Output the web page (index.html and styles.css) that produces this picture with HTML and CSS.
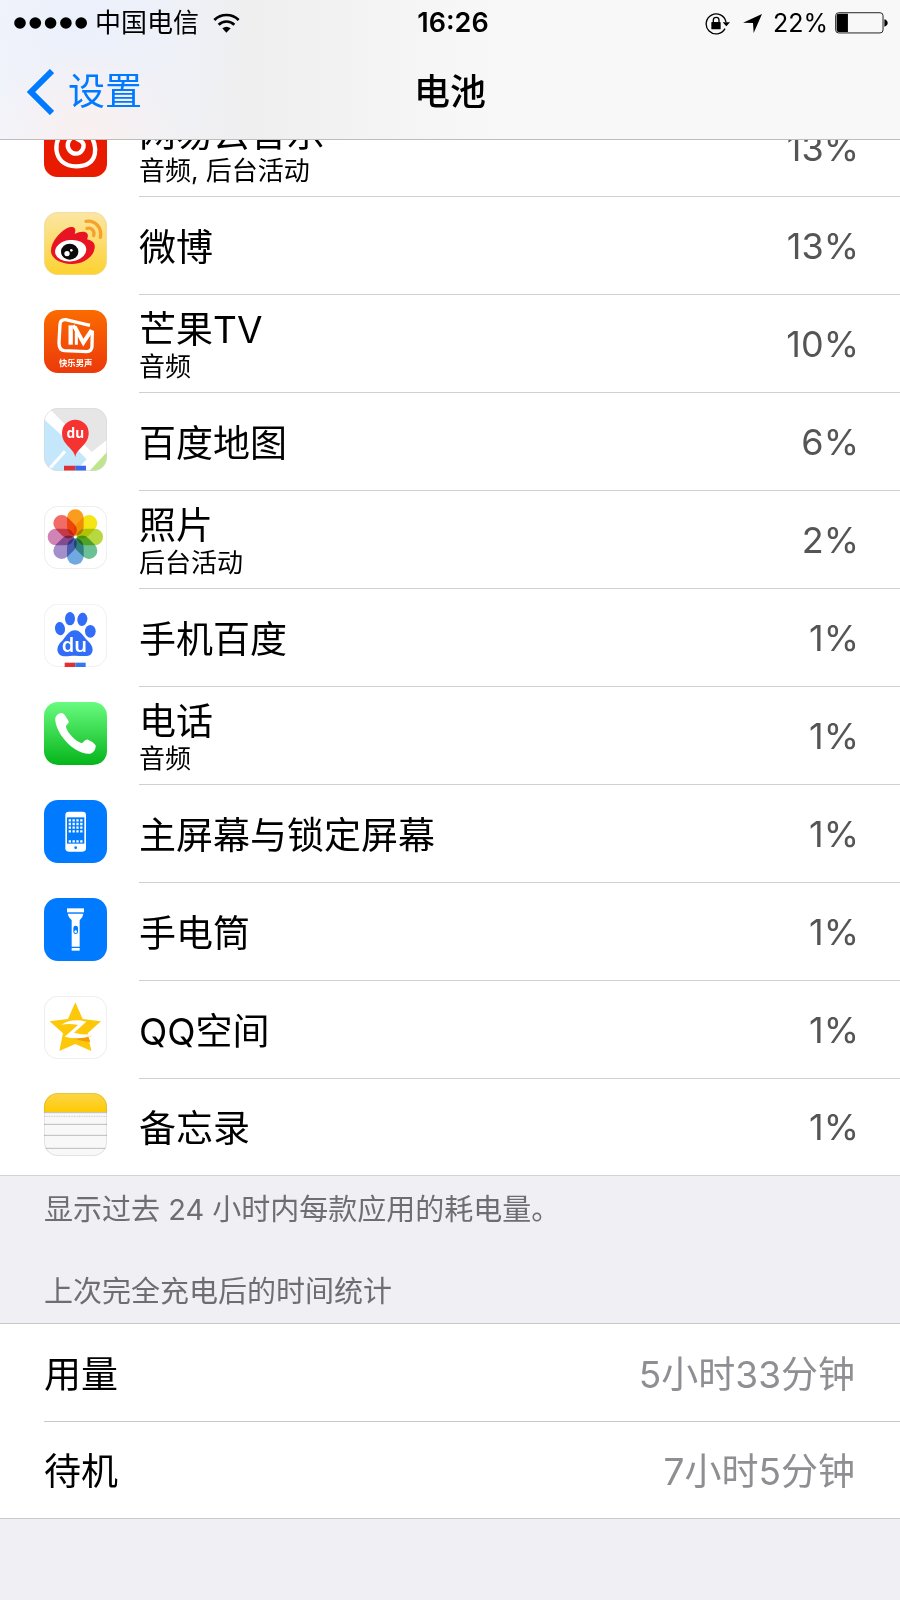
FILE: index.html
```html
<!DOCTYPE html>
<html lang="zh-CN">
<head>
<meta charset="utf-8">
<meta name="viewport" content="width=device-width, initial-scale=1">
<title>电池</title>
<link rel="stylesheet" href="styles.css">
</head>
<body>
<header class="top">
  <div class="status">
    <div class="status-left">
      <svg class="signal" viewBox="0 0 74 12" aria-hidden="true"><circle cx="6" cy="6" r="5.8"/><circle cx="21.3" cy="6" r="5.8"/><circle cx="36.6" cy="6" r="5.8"/><circle cx="51.9" cy="6" r="5.8"/><circle cx="67.2" cy="6" r="5.8"/></svg>
      <span>中国电信</span>
      <svg class="wifi" viewBox="0 0 81 60" aria-hidden="true"><g fill="none" stroke="#000" stroke-width="8"><path d="M4 21A52 52 0 0 1 77 21"/><path d="M17 35A34 34 0 0 1 64 35"/></g><path d="M28 46Q40 36 53 46L40 59Z"/></svg>
    </div>
    <time class="clock">16:26</time>
    <div class="status-right">
      <svg class="lock" viewBox="0 0 75 69" aria-hidden="true"><path d="M60 50A30 30 0 1 1 63 30" fill="none" stroke="#000" stroke-width="4"/><path d="M53 31H75L64 43Z"/><rect x="19" y="30" width="28" height="22" rx="2"/><path d="M25 32V24Q25 16 33.500 16T42 24V32" fill="none" stroke="#000" stroke-width="4"/></svg>
      <svg class="arrow" viewBox="0 0 57 57" aria-hidden="true"><path d="M57 0L32 57L30 27L0 26Z"/></svg>
      <span class="charge">22%</span>
      <svg class="battery" viewBox="0 0 160 66" aria-hidden="true"><rect x="2" y="2" width="143" height="61" rx="9" fill="none" stroke="#222" stroke-width="3"/><path d="M11 5H39V60H11Q5 60 5 54V11Q5 5 11 5Z"/><path d="M149 22Q159 25 159 33T149 44Z"/></svg>
    </div>
  </div>
  <nav class="nav">
    <a class="back" href="#settings"><svg class="chevron" viewBox="0 0 27 46" aria-hidden="true"><path d="M25 2L4 23L25 44" fill="none" stroke="currentColor" stroke-width="6"/></svg><span>设置</span></a>
    <h1 class="page-title">电池</h1>
  </nav>
</header>
<main>
  <ul class="group apps">
    <li class="row">
      <svg class="icon" viewBox="0 0 189 189" aria-hidden="true"><rect width="189" height="189" rx="40" fill="#e81b00"/><g fill="none" stroke="#fff" stroke-width="13" stroke-linecap="round"><path d="M72 44C22 66 22 157 96 157S158 88 140 66S100 50 92 62"/><path d="M102 30C84 38 92 58 94 68S108 76 116 86S114 119 96 119S68 100 72 87S86 68 96 66"/></g></svg>
      <div class="label"><span class="name">网易云音乐</span><span class="detail">音频, 后台活动</span></div><span class="percent">13%</span>
    </li>
    <li class="row">
      <svg class="icon" viewBox="0 0 189 189" aria-hidden="true"><defs><linearGradient id="weibo" x2="0" y2="1"><stop stop-color="#fbe6a5"/><stop offset="1" stop-color="#fdd22f"/></linearGradient></defs><rect x="1" y="1" width="187" height="187" rx="41" fill="url(#weibo)" stroke="#ead392" stroke-width="2"/><path d="M21 115C22 90 45 62 66 50C76 44 88 43 92 49C96 55 93 60 92 66C108 58 124 57 130 65C134 71 130 78 129 82C144 85 154 93 152 107C149 136 115 158 80 156C45 154 20 138 21 115Z" fill="#e81423"/><ellipse cx="80" cy="116" rx="47" ry="32" transform="rotate(-7 80 116)" fill="#fff"/><ellipse cx="77" cy="119" rx="26" ry="24" fill="#0a0a0a"/><circle cx="69" cy="125" r="8" fill="#fff"/><circle cx="82" cy="115" r="4" fill="#fff"/><g fill="none" stroke="#f5a22d" stroke-width="10" stroke-linecap="round"><path d="M126 28C155 24 175 48 169 76"/><path d="M129 49C143 46 153 57 149 71"/></g></svg>
      <div class="label"><span class="name">微博</span></div><span class="percent">13%</span>
    </li>
    <li class="row">
      <svg class="icon" viewBox="0 0 189 189" aria-hidden="true"><defs><linearGradient id="mango" x2="0" y2="1"><stop stop-color="#fb6b00"/><stop offset="1" stop-color="#ec390b"/></linearGradient></defs><rect width="189" height="189" rx="42" fill="url(#mango)"/><g fill="none" stroke="#fff"><path d="M138 46L65 29Q49 28 48 43L45 98Q45 120 61 122L128 125Q143 124 144 110L145 62" stroke-width="10"/><path d="M80 104V46" stroke-width="13"/><path d="M88 46L97 62V104" stroke-width="9"/><path d="M92 50L118 98L143 60" stroke-width="12"/></g><text class="mango-text" x="95" y="168" text-anchor="middle">快乐男声</text></svg>
      <div class="label"><span class="name">芒果TV</span><span class="detail">音频</span></div><span class="percent">10%</span>
    </li>
    <li class="row">
      <svg class="icon" viewBox="0 0 189 189" aria-hidden="true"><defs><clipPath id="tile"><rect width="189" height="189" rx="42"/></clipPath></defs><g clip-path="url(#tile)"><rect width="189" height="189" fill="#fff"/><path d="M15 0L143 132L189 96V0Z" fill="#e6e6e6"/><path d="M0 34L101 126L128 154L95 189H0Z" fill="#c5e7fb"/><path d="M10 189L63 130" stroke="#fff" stroke-width="9"/><path d="M189 132V189H136Z" fill="#bfe58c"/><path d="M60 173H94V189H60Z" fill="#df3034"/><path d="M94 173H126V189H94Z" fill="#3b67ec"/><path d="M94 148C90 119 54 112 54 75A40 40 0 0 1 134 75C134 112 98 119 94 148Z" fill="#f53431"/></g><rect x="1" y="1" width="187" height="187" rx="41" fill="none" stroke="#d8d8d8" stroke-width="2"/><text class="du-text" x="94" y="91" font-size="41" text-anchor="middle">du</text></svg>
      <div class="label"><span class="name">百度地图</span></div><span class="percent">6%</span>
    </li>
    <li class="row">
      <svg class="icon" viewBox="0 0 189 189" aria-hidden="true"><rect x="1" y="1" width="187" height="187" rx="41" fill="#fff" stroke="#e3e3e3" stroke-width="2"/><g class="petals" transform="translate(94 93)"><rect x="-25" y="-83" width="50" height="79" rx="25" fill="#fa9d1f"/><rect x="-25" y="-83" width="50" height="79" rx="25" fill="#f5e514" transform="rotate(45)"/><rect x="-25" y="-83" width="50" height="79" rx="25" fill="#b7d840" transform="rotate(90)"/><rect x="-25" y="-83" width="50" height="79" rx="25" fill="#6cc095" transform="rotate(135)"/><rect x="-25" y="-83" width="50" height="79" rx="25" fill="#70a9df" transform="rotate(180)"/><rect x="-25" y="-83" width="50" height="79" rx="25" fill="#a28fcb" transform="rotate(225)"/><rect x="-25" y="-83" width="50" height="79" rx="25" fill="#d084b6" transform="rotate(270)"/><rect x="-25" y="-83" width="50" height="79" rx="25" fill="#f26c67" transform="rotate(315)"/></g></svg>
      <div class="label"><span class="name">照片</span><span class="detail">后台活动</span></div><span class="percent">2%</span>
    </li>
    <li class="row">
      <svg class="icon" viewBox="0 0 189 189" aria-hidden="true"><rect x="1" y="1" width="187" height="187" rx="41" fill="#fff" stroke="#e8e8e8" stroke-width="2"/><g fill="#316df6"><ellipse cx="48" cy="74" rx="15" ry="20" transform="rotate(-8 48 74)"/><ellipse cx="78" cy="44" rx="15" ry="20"/><ellipse cx="115" cy="46" rx="15" ry="20" transform="rotate(8 115 46)"/><ellipse cx="139" cy="82" rx="16" ry="19"/><path d="M93 79C110 79 118 98 128 107C146 122 150 138 142 149C134 160 112 155 93 155C74 155 55 162 45 150C36 138 40 122 55 110C66 98 74 79 93 79Z"/></g><path d="M62 176H94V189H62Z" fill="#df3034"/><path d="M94 176H125V189H94Z" fill="#3577ed"/><text class="du-text du-wide" x="91" y="144" font-size="60" text-anchor="middle">du</text></svg>
      <div class="label"><span class="name">手机百度</span></div><span class="percent">1%</span>
    </li>
    <li class="row">
      <svg class="icon" viewBox="0 0 189 189" aria-hidden="true"><defs><linearGradient id="phone" x2="0" y2="1"><stop stop-color="#69fb80"/><stop offset="1" stop-color="#05b51a"/></linearGradient></defs><rect width="189" height="189" rx="42" fill="url(#phone)"/><path d="M34 47C37 39 45 33 54 33C62 35 68 48 74 58C76 66 64 68 66 76C72 95 95 118 112 123C119 124 122 111 132 113C142 117 152 124 155 130C156 140 150 153 138 155C110 157 77 135 57 107C44 90 32 66 34 47Z" fill="#fff"/></svg>
      <div class="label"><span class="name">电话</span><span class="detail">音频</span></div><span class="percent">1%</span>
    </li>
    <li class="row">
      <svg class="icon" viewBox="0 0 189 189" aria-hidden="true"><rect width="189" height="189" rx="42" fill="#007aff"/><rect x="64" y="35" width="62" height="120" rx="10" fill="#fff"/><path d="M69 52H121V131H69Z" fill="#007aff"/><g stroke="#fff" stroke-width="7" stroke-dasharray="7 4.500"><path d="M74 61H116M74 72H116M74 83H116M74 94H116M74 124H116"/></g><circle cx="95" cy="143" r="4" fill="#007aff"/></svg>
      <div class="label"><span class="name">主屏幕与锁定屏幕</span></div><span class="percent">1%</span>
    </li>
    <li class="row">
      <svg class="icon" viewBox="0 0 189 189" aria-hidden="true"><rect width="189" height="189" rx="42" fill="#007aff"/><g fill="#fff"><path d="M69 31H120V43H69Z"/><path d="M71 47H118Q117 58 107 67V146H83V67Q73 58 71 47Z"/><path d="M83 150H107V158H83Z"/></g><rect x="88" y="83" width="14" height="25" rx="7" fill="#007aff"/><circle cx="95" cy="101" r="4" fill="#fff"/></svg>
      <div class="label"><span class="name">手电筒</span></div><span class="percent">1%</span>
    </li>
    <li class="row">
      <svg class="icon" viewBox="0 0 189 189" aria-hidden="true"><rect x="1" y="1" width="187" height="187" rx="41" fill="#fff" stroke="#e3e3e3" stroke-width="2"/><path d="M94 19L116 69L171 76L131 112L142 165L94 144L46 165L57 112L17 76L72 69Z" fill="#fdc80a"/><path d="M86 126Q124 130 148 118L133 122L139 137Q112 137 86 126Z" fill="#f39a08"/><path d="M52 86Q84 66 127 77L90 110Q118 118 148 115Q112 135 62 122L102 87Q76 81 52 86Z" fill="#fff"/></svg>
      <div class="label"><span class="name">QQ空间</span></div><span class="percent">1%</span>
    </li>
    <li class="row">
      <svg class="icon" viewBox="0 0 189 189" aria-hidden="true"><defs><linearGradient id="notes" x2="0" y2="1"><stop stop-color="#fdd648"/><stop offset="1" stop-color="#fdca03"/></linearGradient></defs><g clip-path="url(#tile)"><rect width="189" height="189" fill="#f8f8f8"/><rect width="189" height="58" fill="url(#notes)"/><g stroke="#bcbcbc" stroke-width="3"><path d="M0 59H189M0 94H189M0 127H189M0 166H189"/><path d="M0 70H189" stroke="#ccc" stroke-dasharray="3 2"/></g></g><rect x="1" y="1" width="187" height="187" rx="41" fill="none" stroke="#000" stroke-opacity=".15" stroke-width="2"/></svg>
      <div class="label"><span class="name">备忘录</span></div><span class="percent">1%</span>
    </li>
  </ul>
  <p class="note">显示过去 24 小时内每款应用的耗电量。</p>
  <h2 class="section-title">上次完全充电后的时间统计</h2>
  <dl class="group stats">
    <div class="stat"><dt>用量</dt><dd>5小时33分钟</dd></div>
    <div class="stat"><dt>待机</dt><dd>7小时5分钟</dd></div>
  </dl>
</main>
</body>
</html>
```

FILE: styles.css
```css
* { box-sizing: border-box; }
body {
  margin: 0;
  background: #efeff4;
  color: #000;
  font-family: Inter, "Noto Sans CJK SC", sans-serif;
  font-size: 37px;
  font-weight: 380;
  line-height: 44px;
}
h1, h2, p, ul, dl, dd { margin: 0; padding: 0; }
svg { display: block; flex: none; }

.top {
  position: sticky;
  top: 0;
  z-index: 1;
  height: 140px;
  border-bottom: 1px solid #bdbdbf;
  background:
    radial-gradient(circle at 10% 100%, #faf0ef 0, transparent 100px),
    radial-gradient(circle at 10% 20%, #ebf0fb 0, transparent 160px),
    linear-gradient(90deg, #f4f5fb, #efeff0 28%, #f8f8f8 55%);
}
.status {
  display: grid;
  grid-template-columns: 1fr auto 1fr;
  align-items: center;
  height: 46px;
  padding: 0 12px 0 14px;
  font-size: 26px;
  line-height: 32px;
}
.status-left, .status-right { display: flex; align-items: center; font-weight: 400; }
.status-left { gap: 7px; }
.status-right { justify-content: flex-end; gap: 7px; }
.clock { padding-left: 4px; font-size: 27px; font-weight: 600; }
.charge { font-size: 25px; }
.signal { width: 74px; height: 12px; }
.wifi { width: 27px; height: 20px; margin-left: 7px; }
.lock { width: 25px; height: 23px; margin-right: 6px; }
.arrow { width: 19px; height: 19px; margin-right: 4px; }
.battery { width: 53px; height: 22px; }

.nav {
  display: grid;
  grid-template-columns: 1fr auto 1fr;
  align-items: center;
  height: 92px;
  padding: 0 27px;
}
.back {
  display: flex;
  align-items: center;
  gap: 14px;
  color: #007aff;
  text-decoration: none;
}
.chevron { width: 27px; height: 46px; }
.page-title { font-size: 36px; font-weight: 500; line-height: 44px; }

.group { background: #fff; list-style: none; }
.apps { margin-top: -41px; border-bottom: 1px solid #d3d3d7; }
.row {
  display: grid;
  grid-template-columns: 63px 1fr auto;
  align-items: center;
  column-gap: 32px;
  height: 98px;
  padding: 0 41px 0 44px;
  background: linear-gradient(#d0d0d3, #d0d0d3) 139px 100% / 100% 1px no-repeat;
}
.row:last-child { height: 96px; background: none; }
.icon { width: 63px; height: 63px; margin-bottom: 6px; }
.label { display: flex; flex-direction: column; padding-top: 3px; }
.name { line-height: 42px; }
.detail { font-size: 26px; line-height: 32px; }
.percent { color: #555; font-size: 36px; }
.mango-text { font-size: 25px; font-weight: 700; fill: #fff; }
.du-text { font-family: "Noto Sans", sans-serif; font-weight: 700; fill: #fff; }
.du-wide { font-weight: 600; }
.petals rect { mix-blend-mode: multiply; }

.note, .section-title {
  padding: 0 44px;
  color: #6d6d72;
  font-size: 29px;
  font-weight: 380;
  line-height: 40px;
}
.note { padding-top: 14px; }
.section-title { padding-top: 42px; padding-bottom: 11px; }
.stats { border-top: 1px solid #c8c7cc; border-bottom: 1px solid #c8c7cc; }
.stat {
  display: flex;
  align-items: center;
  justify-content: space-between;
  height: 97px;
  padding: 4px 45px 0 44px;
}
.stat + .stat { background: linear-gradient(#c8c7cc, #c8c7cc) 44px 0 / 100% 1px no-repeat; }
.stat dd { color: #8e8e93; }
```
